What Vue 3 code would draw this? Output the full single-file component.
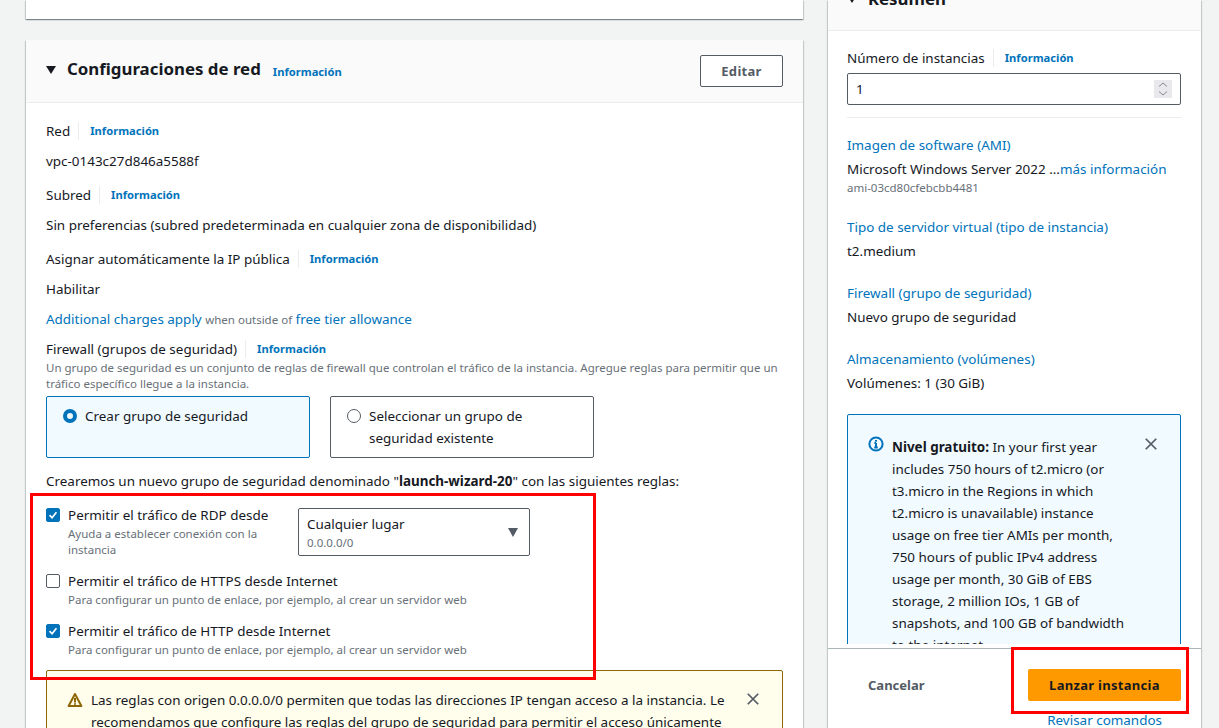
<template>
  <div class="page">
    <main class="left">
      <div class="card stub"></div>

      <section class="card network">
        <header class="net-head">
          <span class="caret"></span>
          <h2>Configuraciones de red</h2>
          <a class="info head-info">Información</a>
          <button class="edit">Editar</button>
        </header>

        <div class="net-body">
          <div v-for="f in fields" :key="f.label" class="field">
            <div class="label-row">
              <span>{{ f.label }}</span>
              <i class="sep"></i>
              <a class="info">Información</a>
            </div>
            <div class="value">{{ f.value }}</div>
          </div>

          <div class="charges">
            <a>Additional charges apply</a> <small>when outside of</small> <a>free tier allowance</a>
          </div>

          <div class="label-row fw-label">
            <span>Firewall (grupos de seguridad)</span>
            <i class="sep"></i>
            <a class="info">Información</a>
          </div>
          <p class="fw-desc">
            Un grupo de seguridad es un conjunto de reglas de firewall que controlan el tráfico de la instancia. Agregue reglas para permitir que un tráfico específico llegue a la instancia.
          </p>

          <div class="tiles">
            <div class="tile on">
              <span class="radio on"></span>
              <span>Crear grupo de seguridad</span>
            </div>
            <div class="tile">
              <span class="radio"></span>
              <span>Seleccionar un grupo de seguridad existente</span>
            </div>
          </div>

          <p class="creating">Crearemos un nuevo grupo de seguridad denominado "<b>launch-wizard-20</b>" con las siguientes reglas:</p>

          <div class="rule first">
            <div class="rule-check">
              <span class="check on"><svg viewBox="0 0 14 14"><path d="M3 7.2l2.9 3L11 3.8" /></svg></span>
              <div class="rule-text">
                <div>Permitir el tráfico de RDP desde</div>
                <small>Ayuda a establecer conexión con la instancia</small>
              </div>
            </div>
            <div class="select">
              <div>Cualquier lugar</div>
              <small>0.0.0.0/0</small>
              <span class="select-caret"></span>
            </div>
          </div>

          <div class="rule">
            <div class="rule-check wide">
              <span class="check"></span>
              <div class="rule-text">
                <div>Permitir el tráfico de HTTPS desde Internet</div>
                <small>Para configurar un punto de enlace, por ejemplo, al crear un servidor web</small>
              </div>
            </div>
          </div>

          <div class="rule">
            <div class="rule-check wide">
              <span class="check on"><svg viewBox="0 0 14 14"><path d="M3 7.2l2.9 3L11 3.8" /></svg></span>
              <div class="rule-text">
                <div>Permitir el tráfico de HTTP desde Internet</div>
                <small>Para configurar un punto de enlace, por ejemplo, al crear un servidor web</small>
              </div>
            </div>
          </div>

          <div class="warning">
            <svg class="warn-icon" viewBox="0 0 16 16">
              <path d="M8 2L1.6 14h12.8z" />
              <path d="M8 6v4.4M8 11.2v1.6" />
            </svg>
            <p>Las reglas con origen 0.0.0.0/0 permiten que todas las direcciones IP tengan acceso a la instancia. Le recomendamos que configure las reglas del grupo de seguridad para permitir el acceso únicamente desde direcciones IP conocidas.</p>
            <svg class="close" viewBox="0 0 16 16"><path d="M2 2l12 12M14 2L2 14" /></svg>
          </div>
        </div>
      </section>
    </main>

    <aside class="summary">
      <header class="sum-head"><h2><span class="caret small"></span>Resumen</h2></header>

      <div class="sum-body">
        <div class="label-row">
          <span>Número de instancias</span>
          <i class="sep"></i>
          <a class="info">Información</a>
        </div>
        <div class="count">
          <span>1</span>
          <span class="spinner">
            <svg viewBox="0 0 18 18"><path d="M5 6.5L9 3l4 3.5M5 11.5L9 15l4-3.5" /></svg>
          </span>
        </div>
        <hr />

        <div v-for="s in summary" :key="s.title" class="sum-item">
          <a>{{ s.title }}</a>
          <div>{{ s.value }}<a v-if="s.more">{{ s.more }}</a></div>
          <small v-if="s.sub">{{ s.sub }}</small>
        </div>

        <div class="free">
          <svg class="free-icon" viewBox="0 0 16 16">
            <circle cx="8" cy="8" r="6.6" />
            <path d="M8 7v4.4M6.2 11.4h3.6M6.4 7H8M8 4v1.8" />
          </svg>
          <p><b>Nivel gratuito:</b> In your first year includes 750 hours of t2.micro (or t3.micro in the Regions in which t2.micro is unavailable) instance usage on free tier AMIs per month, 750 hours of public IPv4 address usage per month, 30 GiB of EBS storage, 2 million IOs, 1 GB of snapshots, and 100 GB of bandwidth to the internet.</p>
          <svg class="close" viewBox="0 0 16 16"><path d="M2 2l12 12M14 2L2 14" /></svg>
        </div>
      </div>

      <footer class="sum-foot">
        <div class="actions">
          <a class="cancel">Cancelar</a>
          <button class="launch">Lanzar instancia</button>
        </div>
        <a class="review">Revisar comandos</a>
      </footer>
    </aside>

    <!-- anotaciones rojas de la captura -->
    <div class="mark mark-rules"></div>
    <div class="mark mark-launch"></div>
  </div>
</template>

<script setup>
const fields = [
  { label: 'Red', value: 'vpc-0143c27d846a5588f' },
  { label: 'Subred', value: 'Sin preferencias (subred predeterminada en cualquier zona de disponibilidad)' },
  { label: 'Asignar automáticamente la IP pública', value: 'Habilitar' }
]

const summary = [
  { title: 'Imagen de software (AMI)', value: 'Microsoft Windows Server 2022 ...', more: 'más información', sub: 'ami-03cd80cfebcbb4481' },
  { title: 'Tipo de servidor virtual (tipo de instancia)', value: 't2.medium' },
  { title: 'Firewall (grupo de seguridad)', value: 'Nuevo grupo de seguridad' },
  { title: 'Almacenamiento (volúmenes)', value: 'Volúmenes: 1 (30 GiB)' }
]
</script>

<style>
html, body { margin: 0; background: #f2f3f3; }
</style>

<style scoped>
.page {
  position: relative;
  display: flex;
  width: 1219px;
  height: 728px;
  overflow: hidden;
  background: #f2f3f3;
  font-family: "Noto Sans", sans-serif;
  font-size: 13.44px;
  line-height: 22px;
  color: #16191f;
}
a { color: #0073bb; }
small { font-size: 11.5px; line-height: 16px; color: #687078; }
p { margin: 0; }

.left { width: 777px; margin-left: 26px; }
.card {
  background: #fff;
  box-shadow: 0 1px 1px 0 rgba(0, 28, 36, 0.3), 1px 1px 1px 0 rgba(0, 28, 36, 0.15), -1px 1px 1px 0 rgba(0, 28, 36, 0.15);
}
.stub { height: 19px; margin-bottom: 21px; }

.net-head {
  display: flex;
  align-items: center;
  height: 62px;
  padding: 0 20px;
  background: #fafafa;
  border-bottom: 1px solid #eaeded;
}
.caret {
  width: 0;
  height: 0;
  margin: -2px 11px 0 0;
  border-left: 5.5px solid transparent;
  border-right: 5.5px solid transparent;
  border-top: 8px solid #16191f;
}
h2 { margin: -4px 0 0; font-size: 16.85px; font-weight: 700; line-height: 22px; }
.info { font-size: 11.2px; font-weight: 700; }
.head-info { margin: 1px 0 0 12px; }
.edit {
  width: 83px;
  height: 32px;
  margin-left: auto;
  background: #fff;
  border: 1px solid #545b64;
  border-radius: 2px;
  font: 700 13px "Noto Sans", sans-serif;
  letter-spacing: 0.3px;
  color: #545b64;
}

.net-body { padding: 17px 20px 0; }
.label-row { display: flex; align-items: center; height: 22px; }
.sep { width: 1px; height: 18px; margin: 0 11px 0 8px; background: #eaeded; }
.field { margin-bottom: 12px; }
.field .value { margin-top: 8px; }
.charges { margin-top: -4px; }
.charges small { font-size: 11.5px; }
.fw-label { margin-top: 8px; }
.fw-desc { margin-top: 0; font-size: 11.5px; line-height: 16px; color: #687078; }

.tiles { display: grid; grid-template-columns: 264px 264px; gap: 20px; margin-top: 4px; }
.tile {
  display: flex;
  gap: 8px;
  height: 62px;
  box-sizing: border-box;
  padding: 8px 16px;
  border: 1px solid #545b64;
  border-radius: 2px;
}
.tile.on { background: #f1faff; border-color: #0073bb; }
.radio {
  flex: none;
  box-sizing: border-box;
  width: 14px;
  height: 14px;
  margin-top: 4px;
  border: 1px solid #545b64;
  border-radius: 50%;
}
.radio.on { border: 4px solid #0073bb; }

.creating { margin-top: 12px; }
.rule { display: flex; margin-top: 12px; }
.rule-check { display: flex; gap: 8px; width: 252px; }
.rule-check.wide { width: auto; }
.check {
  flex: none;
  box-sizing: border-box;
  width: 14px;
  height: 14px;
  margin-top: 4px;
  background: #fff;
  border: 1px solid #545b64;
  border-radius: 2px;
}
.check.on { background: #0073bb; border-color: #0073bb; }
.check svg { display: block; width: 12px; height: 12px; }
.check path { fill: none; stroke: #fff; stroke-width: 2; }
.rule-text small { display: block; }

.select {
  position: relative;
  box-sizing: border-box;
  width: 232px;
  height: 48px;
  margin-top: 4px;
  padding: 4px 8px;
  border: 1px solid #545b64;
  border-radius: 2px;
}
.select div { line-height: 22px; }
.select small { display: block; }
.select-caret {
  position: absolute;
  right: 11px;
  top: 19px;
  border-left: 5.5px solid transparent;
  border-right: 5.5px solid transparent;
  border-top: 9px solid #545b64;
}

.warning {
  display: flex;
  gap: 8px;
  margin-top: 12px;
  padding: 18px 20px;
  background: #fffdeb;
  border: 1px solid #8d6605;
  border-radius: 2px;
}
.warn-icon { flex: none; width: 16px; height: 16px; margin-top: 3px; }
.warn-icon path { fill: none; stroke: #8d6605; stroke-width: 2; stroke-linejoin: round; }
.close { flex: none; width: 14px; height: 14px; margin: 3px 2px 0 12px; }
.close path { fill: none; stroke: #545b64; stroke-width: 2; }

.summary {
  display: flex;
  flex-direction: column;
  width: 373px;
  margin-left: 25px;
  background: #fff;
  box-shadow: 0 1px 1px 0 rgba(0, 28, 36, 0.3), 1px 1px 1px 0 rgba(0, 28, 36, 0.15), -1px 1px 1px 0 rgba(0, 28, 36, 0.15);
}
.sum-head {
  display: flex;
  align-items: flex-end;
  height: 30px;
  flex: none;
  overflow: hidden;
  padding: 0 19px;
  background: #fafafa;
  border-bottom: 1px solid #eaeded;
}
.sum-head h2 { margin-bottom: 20px; }
.caret.small { display: inline-block; vertical-align: middle; }

.sum-body {
  height: 613px;
  flex: none;
  overflow: hidden;
  box-sizing: border-box;
  padding: 16px 20px 0 19px;
}
.count {
  display: flex;
  align-items: center;
  justify-content: space-between;
  height: 32px;
  margin-top: 4px;
  padding: 0 8px;
  border: 1px solid #545b64;
  border-radius: 2px;
  box-sizing: border-box;
}
.spinner { display: block; width: 18px; height: 18px; background: #e9e9ed; }
.spinner svg { display: block; }
.spinner path { fill: none; stroke: #8a8a8a; stroke-width: 1; }
hr { height: 1px; margin: 12px 0 0; background: #eaeded; border: 0; }
.sum-item { margin-top: 16px; }
.sum-item > a { display: block; margin-bottom: 2px; }
.sum-item small { display: block; }
.sum-item + .sum-item { margin-top: 20px; }

.free {
  display: flex;
  gap: 8px;
  margin-top: 20px;
  padding: 21px 20px 20px;
  background: #f1faff;
  border: 1px solid #0073bb;
  border-radius: 2px;
}
.free-icon { flex: none; width: 16px; height: 16px; margin-top: 0; }
.free-icon circle, .free-icon path { fill: none; stroke: #0073bb; stroke-width: 2; }
.free .close { width: 14px; height: 14px; margin: 1px 2px 0 8px; }

.sum-foot {
  flex: none;
  margin-top: 4px;
  padding: 0 20px;
  border-top: 1px solid #aab7b8;
}
.actions { display: flex; align-items: center; justify-content: space-between; padding: 20px 0 8px 20px; }
.cancel { font-weight: 700; font-size: 13px; color: #545b64; }
.launch {
  width: 153px;
  height: 32px;
  background: #ff9900;
  border: 0;
  border-radius: 2px;
  font: 700 13px "Noto Sans", sans-serif;
  letter-spacing: 0.3px;
  color: #16191f;
}
.review { display: block; text-align: right; padding-right: 19px; }

.mark { position: absolute; box-sizing: border-box; border: 3px solid #ff0000; pointer-events: none; }
.mark-rules { left: 30px; top: 493px; width: 566px; height: 187px; }
.mark-launch { left: 1011px; top: 647px; width: 178px; height: 67px; }
</style>
